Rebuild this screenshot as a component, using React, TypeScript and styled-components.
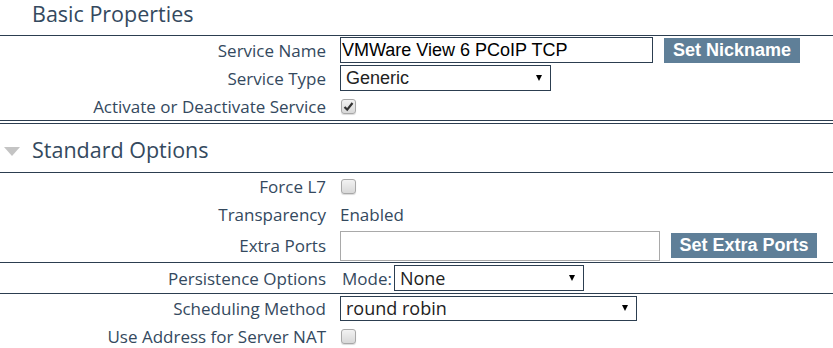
import React from "react";
import styled, { createGlobalStyle } from "styled-components";

const Global = createGlobalStyle`
  html, body {
    margin: 0;
    padding: 0;
    background: #ffffff;
  }
  body {
    font-family: "Open Sans", "Noto Sans", sans-serif;
    color: #34495e;
  }
`;

const Page = styled.div`
  width: 833px;
  height: 348px;
  overflow: hidden;
  background: #fff;
`;

const SectionHeader = styled.div<{ h: number; pt: number }>`
  height: ${(p) => p.h}px;
  padding-top: ${(p) => p.pt}px;
  display: flex;
  align-items: flex-start;
  font-size: 21.5px;
  line-height: 25px;
  color: #34495e;
  padding-left: 4px;
  box-sizing: border-box;
`;

const Arrow = styled.span<{ show?: boolean }>`
  width: 0;
  height: 0;
  border-left: 8px solid transparent;
  border-right: 8px solid transparent;
  border-top: 9px solid ${(p) => (p.show ? "#c4c4c4" : "transparent")};
  margin-right: 12px;
  margin-top: 10px;
`;

const Rule = styled.div`
  height: 1px;
  background: #2c3e50;
`;

const DoubleRule = styled.div`
  height: 2px;
  border-top: 1px solid #2c3e50;
  border-bottom: 1px solid #2c3e50;
`;

const Row = styled.div<{ h: number }>`
  display: grid;
  grid-template-columns: 326px 1fr;
  column-gap: 14px;
  align-items: center;
  height: ${(p) => p.h}px;
`;

const Label = styled.div`
  text-align: right;
  font-size: 17px;
  color: #34495e;
  white-space: nowrap;
`;

const Value = styled.div`
  display: flex;
  align-items: center;
  font-size: 17px;
  color: #34495e;
`;

const TextBox = styled.div<{ w: number; h: number; light?: boolean }>`
  width: ${(p) => p.w}px;
  height: ${(p) => p.h}px;
  box-sizing: border-box;
  border: 1px solid ${(p) => (p.light ? "#a9a9a9" : "#2c3e50")};
  font-family: "Liberation Sans", Arial, sans-serif;
  font-size: 18px;
  color: #000;
  padding: 0 1px;
  display: flex;
  align-items: center;
`;

const Select = styled.div<{ w: number; h: number; font?: string }>`
  width: ${(p) => p.w}px;
  height: ${(p) => p.h}px;
  box-sizing: border-box;
  border: 1px solid #2c3e50;
  font-family: ${(p) => p.font ?? '"Liberation Sans", Arial, sans-serif'};
  font-size: 18px;
  color: #222;
  padding: 0 8px 0 5px;
  display: flex;
  align-items: center;
  justify-content: space-between;
  &::after {
    content: "";
    border-left: 3.5px solid transparent;
    border-right: 3.5px solid transparent;
    border-top: 6px solid #000;
  }
`;

const Button = styled.div<{ w: number; ml: number }>`
  width: ${(p) => p.w}px;
  height: 25px;
  margin-left: ${(p) => p.ml}px;
  background: #5f7f98;
  color: #fff;
  font-family: "Liberation Sans", Arial, sans-serif;
  font-weight: bold;
  font-size: 18px;
  display: flex;
  align-items: center;
  justify-content: center;
`;

const Check = styled.div`
  width: 15px;
  height: 15px;
  margin-left: 1px;
  box-sizing: border-box;
  border: 1px solid #a8a8a8;
  border-radius: 3px;
  background: linear-gradient(#f2f2f2, #d8d8d8);
  box-shadow: 0 1px 1px rgba(0, 0, 0, 0.15);
  display: flex;
  align-items: center;
  justify-content: center;
`;

const ModeLabel = styled.span`
  margin-left: 2px;
  margin-right: 2px;
`;

const Tick = () => (
  <svg width="11" height="11" viewBox="0 0 11 11">
    <path d="M1.5 6 L4.2 8.6 L9.5 2" fill="none" stroke="#333" strokeWidth="2.2" />
  </svg>
);

export default function App() {
  return (
    <Page>
      <Global />
      <SectionHeader h={35} pt={1}>
        <Arrow />
        Basic Properties
      </SectionHeader>
      <Rule />
      <Row h={28}>
        <Label>Service Name</Label>
        <Value>
          <TextBox w={313} h={26}>VMWare View 6 PCoIP TCP</TextBox>
          <Button w={136} ml={11}>Set Nickname</Button>
        </Value>
      </Row>
      <Row h={28}>
        <Label>Service Type</Label>
        <Value>
          <Select w={211} h={26}>Generic</Select>
        </Value>
      </Row>
      <Row h={28}>
        <Label>Activate or Deactivate Service</Label>
        <Value>
          <Check>
            <Tick />
          </Check>
        </Value>
      </Row>
      <DoubleRule />
      <SectionHeader h={48} pt={13}>
        <Arrow show />
        Standard Options
      </SectionHeader>
      <Rule />
      <Row h={27}>
        <Label>Force L7</Label>
        <Value>
          <Check />
        </Value>
      </Row>
      <Row h={29}>
        <Label>Transparency</Label>
        <Value>Enabled</Value>
      </Row>
      <Row h={33}>
        <Label>Extra Ports</Label>
        <Value>
          <TextBox w={320} h={30} light />
          <Button w={146} ml={11}>Set Extra Ports</Button>
        </Value>
      </Row>
      <Rule />
      <Row h={30}>
        <Label>Persistence Options</Label>
        <Value>
          <ModeLabel>Mode:</ModeLabel>
          <Select w={190} h={26} font='"Open Sans", sans-serif'>None</Select>
        </Value>
      </Row>
      <Rule />
      <Row h={28}>
        <Label>Scheduling Method</Label>
        <Value>
          <Select w={297} h={25} font='"Open Sans", sans-serif'>round robin</Select>
        </Value>
      </Row>
      <Row h={28}>
        <Label>Use Address for Server NAT</Label>
        <Value>
          <Check />
        </Value>
      </Row>
    </Page>
  );
}
